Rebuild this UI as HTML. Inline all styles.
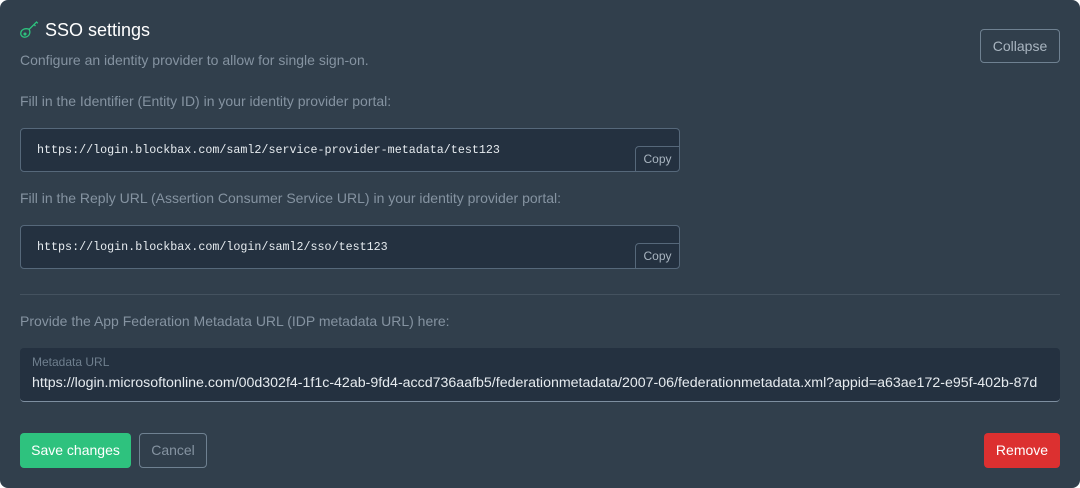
<!DOCTYPE html>
<html><head><style>
body{margin:0;background:#fff;width:1080px;height:488px;overflow:hidden;font-family:"Liberation Sans",sans-serif}
.card{position:absolute;left:0;top:0;width:1080px;height:488px;background:#313f4c;border-radius:8px}
.t{position:absolute;white-space:nowrap}
.lbl{color:#8593a1;font-size:14px}
.box{position:absolute;left:20px;width:658px;height:42px;background:#243140;border:1px solid #56687a;border-radius:4px;overflow:hidden}
.box .m{position:absolute;left:16px;top:14px;font-family:"Liberation Mono",monospace;font-size:11.7px;color:#e6ebef}
.copy{position:absolute;right:-1px;bottom:-1px;width:45px;height:26px;border:1px solid #56687a;border-top-left-radius:4px;box-sizing:border-box;color:#a9b5c0;font-size:12px;text-align:center;line-height:25px}
.btn{position:absolute;border-radius:4px;font-size:14px;text-align:center;box-sizing:border-box}
</style></head><body>
<div class="card">
<svg class="t" style="left:19px;top:21px" width="20" height="19" viewBox="0 0 20 19" fill="none" stroke="#2ec27e" stroke-width="1.3"><path d="M10 8.5 L17.5 1 L18.8 2.3 M15 3.5 L16.5 5"/><path d="M9.5 8 C12 10 11 15 7 16 C3.5 17 1 14 2 11 C2.8 8.5 6 7 9.5 8 Z"/><circle cx="6" cy="13" r="0.9" fill="#2ec27e"/></svg>
<div class="t" style="left:45px;top:20px;color:#fff;font-size:18px">SSO settings</div>
<div class="t lbl" style="left:20px;top:52px">Configure an identity provider to allow for single sign-on.</div>
<div class="btn" style="left:980px;top:29px;width:80px;height:34px;border:1px solid #6f8191;color:#a9b5c0;line-height:32px">Collapse</div>
<div class="t lbl" style="left:20px;top:93px">Fill in the Identifier (Entity ID) in your identity provider portal:</div>
<div class="box" style="top:128px"><div class="m">https://login.blockbax.com/saml2/service-provider-metadata/test123</div><div class="copy">Copy</div></div>
<div class="t lbl" style="left:20px;top:190px">Fill in the Reply URL (Assertion Consumer Service URL) in your identity provider portal:</div>
<div class="box" style="top:225px"><div class="m">https://login.blockbax.com/login/saml2/sso/test123</div><div class="copy">Copy</div></div>
<div style="position:absolute;left:20px;top:294px;width:1040px;height:1px;background:#44525f"></div>
<div class="t lbl" style="left:20px;top:313px">Provide the App Federation Metadata URL (IDP metadata URL) here:</div>
<div style="position:absolute;left:20px;top:348px;width:1040px;height:53px;background:#243140;border-bottom:1px solid #7e8fa0;border-radius:4px;overflow:hidden">
<div class="t" style="left:12px;top:7px;color:#6f7f8e;font-size:12px">Metadata URL</div>
<div class="t" style="left:12px;top:27px;color:#e6ebef;font-size:14.2px;width:1016px;overflow:hidden">https://login.microsoftonline.com/00d302f4-1f1c-42ab-9fd4-accd736aafb5/federationmetadata/2007-06/federationmetadata.xml?appid=a63ae172-e95f-402b-87d</div>
</div>
<div class="btn" style="left:20px;top:433px;width:111px;height:35px;background:#2ec27e;color:#fff;line-height:35px">Save changes</div>
<div class="btn" style="left:139px;top:433px;width:68px;height:35px;border:1px solid #6f8191;color:#8593a1;line-height:33px">Cancel</div>
<div class="btn" style="left:984px;top:433px;width:76px;height:35px;background:#dc3030;color:#fff;line-height:35px">Remove</div>
</div>
</body></html>
